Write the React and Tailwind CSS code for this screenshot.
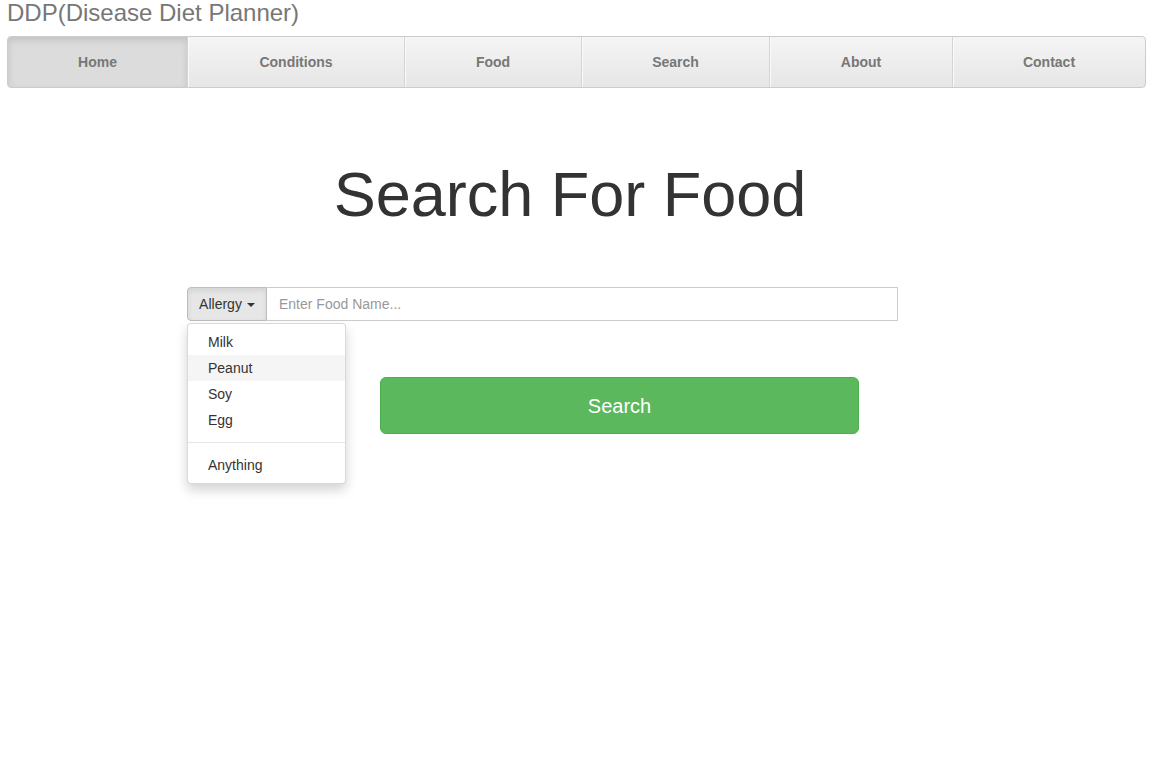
import React from "react";

const navItems = [
  { label: "Home", w: "w-[179px]", active: true },
  { label: "Conditions", w: "w-[217px]" },
  { label: "Food", w: "w-[177px]" },
  { label: "Search", w: "w-[188px]" },
  { label: "About", w: "w-[183px]" },
  { label: "Contact", w: "flex-1" },
];

export default function App() {
  return (
    <div
      className="min-h-[784px] w-[1158px] bg-white text-[#333]"
      style={{ fontFamily: '"Liberation Sans", Arial, sans-serif' }}
    >
      <div className="px-[7px]">
        <div className="text-[24px] leading-[26px] text-[#777]">DDP(Disease Diet Planner)</div>
        <nav className="mt-[10px] flex h-[52px] w-[1139px] overflow-hidden rounded-[4px] border border-[#ccc] bg-gradient-to-b from-[#f5f5f5] to-[#e6e6e6]">
          {navItems.map((it, i) => (
            <div
              key={it.label}
              className={
                (it.active
                  ? "bg-[#dcdcdc] shadow-[inset_0_3px_7px_rgba(0,0,0,0.12)] "
                  : "shadow-[inset_1px_0_0_#fafafa] ") +
                (i > 0 ? "border-l border-[#d4d4d4] " : "") +
                it.w +
                " flex items-center justify-center text-[14px] font-bold text-[#777]"
              }
            >
              {it.label}
            </div>
          ))}
        </nav>
      </div>

      <div className="w-[1140px]">
        <h1 className="mt-[71px] text-center text-[63px] font-normal leading-[70px] text-[#333]">
          Search For Food
        </h1>

        <div className="relative ml-[187px] mt-[58px] flex h-[34px] w-[711px] text-[14px]">
          <div className="flex w-[80px] items-center justify-center gap-[5px] rounded-l-[4px] border border-[#bdbdbd] bg-[#e6e6e6] text-[#333] shadow-[inset_0_3px_5px_rgba(0,0,0,0.08)]">
            <span>Allergy</span>
            <span className="mt-[1px] h-0 w-0 border-x-[4px] border-t-[4px] border-x-transparent border-t-[#333]" />
          </div>
          <div className="flex flex-1 items-center border border-l-0 border-[#ccc] pl-[12px] text-[#999]">
            Enter Food Name...
          </div>

          <div className="absolute left-0 top-[36px] z-10 w-[159px] rounded-[4px] border border-[rgba(0,0,0,0.15)] bg-white py-[5px] shadow-[0_6px_12px_rgba(0,0,0,0.175)]">
            {["Milk", "Peanut", "Soy", "Egg"].map((t) => (
              <div
                key={t}
                className={
                  "px-[20px] py-[3px] leading-[20px] text-[#333] " +
                  (t === "Peanut" ? "bg-[#f5f5f5]" : "")
                }
              >
                {t}
              </div>
            ))}
            <div className="my-[9px] h-px bg-[#e5e5e5]" />
            <div className="px-[20px] py-[3px] leading-[20px] text-[#333]">Anything</div>
          </div>
        </div>

        <button className="ml-[380px] mt-[56px] flex h-[57px] w-[479px] items-center justify-center rounded-[6px] border border-[#4cae4c] bg-[#5cb85c] text-[20px] text-white">
          Search
        </button>
      </div>
    </div>
  );
}
